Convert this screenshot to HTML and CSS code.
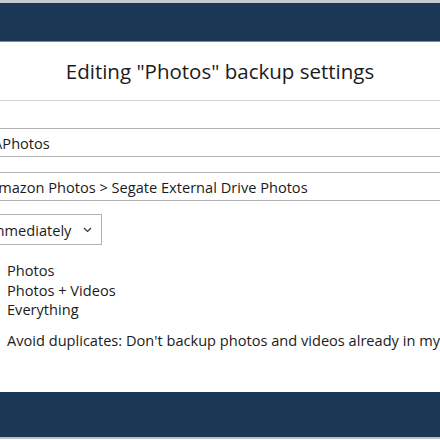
FILE: index.html
```html
<!DOCTYPE html>
<html>
<head>
<meta charset="utf-8">
<link rel="stylesheet" href="styles.css">
</head>
<body>
<div class="strip"></div>
<header class="topbar"></header>
<div class="title">Editing "Photos" backup settings</div>
<main class="form">
  <div class="field field-path"><span class="val">\Photos</span></div>
  <div class="field field-dest"><span class="val">Amazon Photos &gt; Segate External Drive Photos</span></div>
  <div class="select">
    <span class="val">Immediately</span>
    <svg class="chev" width="9" height="6" viewBox="0 0 9 6"><polyline points="1,1 4.5,4.5 8,1" fill="none" stroke="#333" stroke-width="1.2"/></svg>
  </div>
  <ul class="options">
    <li>Photos</li>
    <li>Photos + Videos</li>
    <li>Everything</li>
  </ul>
  <p class="avoid">Avoid duplicates: Don't backup photos and videos already in my</p>
</main>
<footer class="bottombar"></footer>
</body>
</html>
```
FILE: styles.css
```css
html, body {
  margin: 0;
  padding: 0;
  background: #ffffff;
  overflow: hidden;
  width: 440px;
  height: 440px;
}
body {
  font-family: "Open Sans", "Noto Sans", sans-serif;
  color: #1b1b1b;
  display: flex;
  flex-direction: column;
}
.strip {
  height: 3px;
  background: #c3c9d0;
}
.topbar {
  height: 38px;
  background: #1a3856;
  border-bottom: 1px solid #7d8893;
}
.title {
  border-bottom: 1px solid #d2d2d2;
  display: flex;
  align-items: center;
  justify-content: center;
  font-size: 20.5px;
  box-sizing: border-box;
  height: 59px;
}
.form {
  flex: 1;
  padding-top: 27px;
  display: flex;
  flex-direction: column;
  font-size: 14.6px;
}
.field {
  height: 29px;
  box-sizing: border-box;
  border-top: 1px solid #b2b2b2;
  border-bottom: 1px solid #b2b2b2;
  display: flex;
  align-items: center;
  white-space: nowrap;
  overflow: hidden;
}
.field-path .val { margin-left: -3px; }
.field-dest { margin-top: 15px; }
.field-dest .val { margin-left: -11px; }
.select {
  margin-top: 13px;
  width: 102px;
  height: 31px;
  box-sizing: border-box;
  border: 1px solid #b2b2b2;
  border-left: none;
  display: flex;
  align-items: center;
  white-space: nowrap;
  overflow: hidden;
}
.select .val { margin-left: -13px; }
.chev { margin-left: 12px; flex: none; }
.options {
  list-style: none;
  margin: 16px 0 0 0;
  padding: 0 0 0 7px;
  line-height: 19.5px;
}
.avoid {
  margin: 10px 0 0 0;
  padding-left: 7px;
  white-space: nowrap;
}
.bottombar {
  height: 47px;
  background: #1a3856;
  border-bottom: 2px solid #b9c0c8;
  box-sizing: border-box;
  flex: none;
  margin-bottom: 1px;
}
```
